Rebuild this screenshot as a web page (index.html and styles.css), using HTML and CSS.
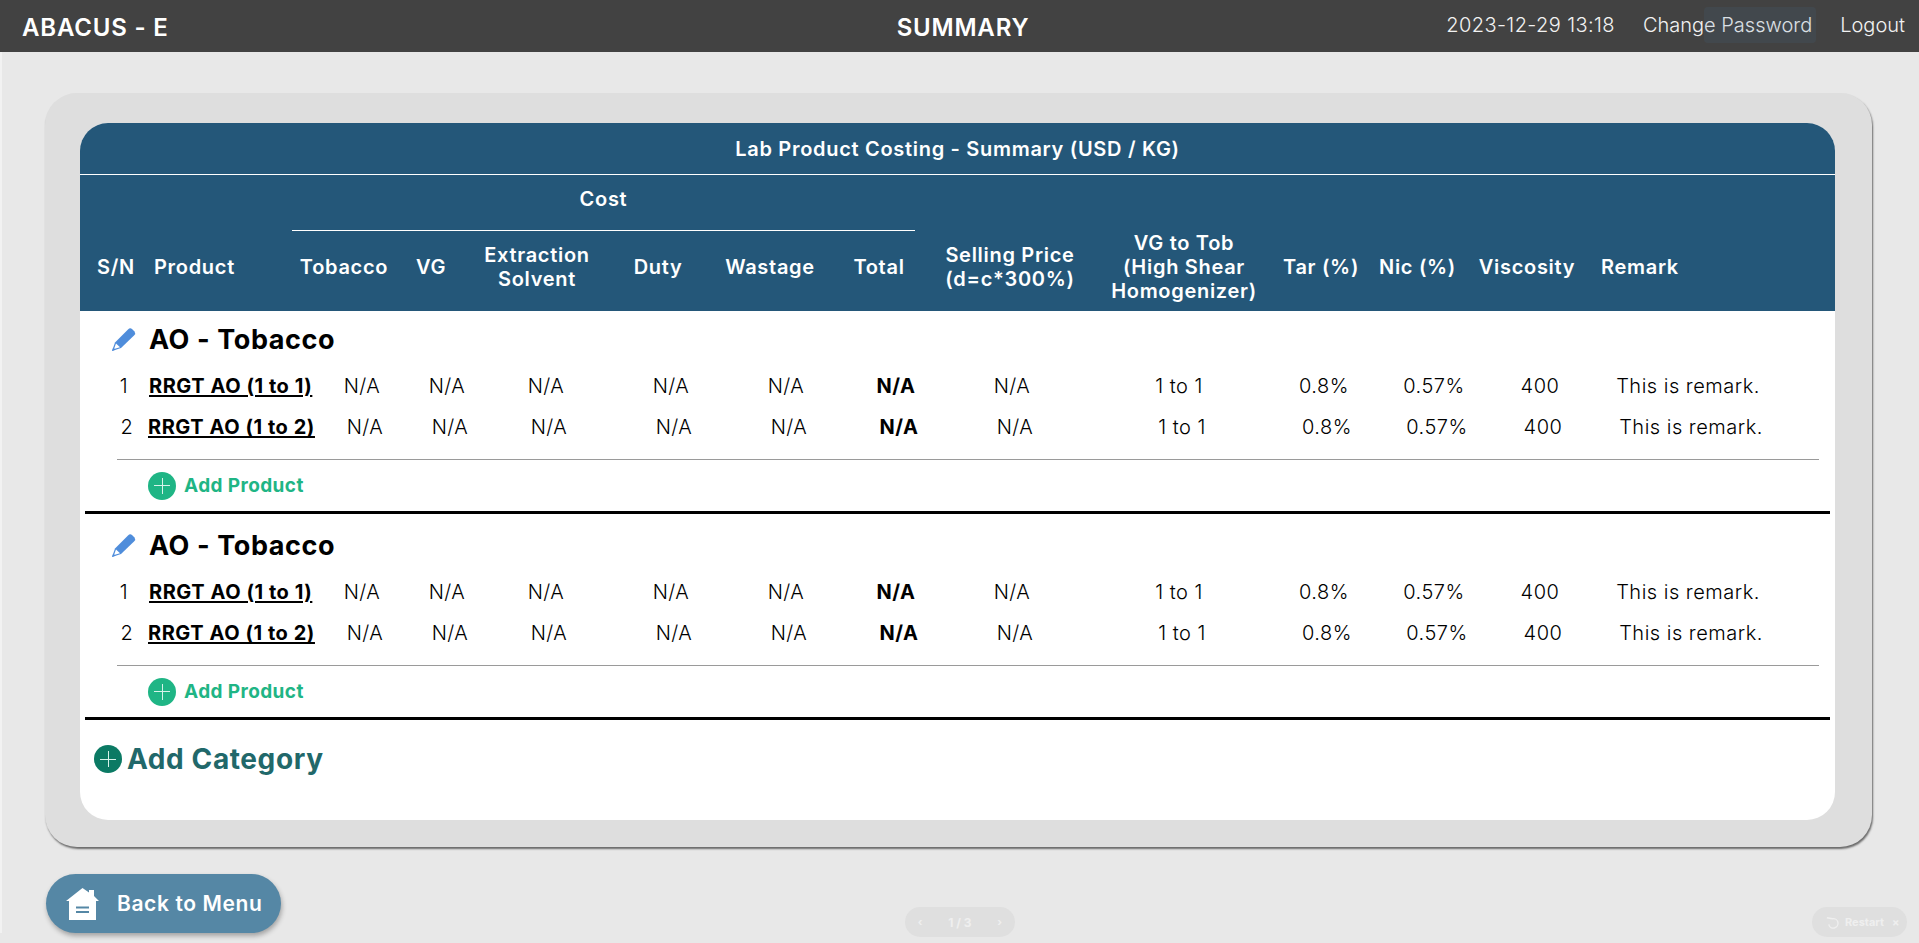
FILE: index.html
```html
<!DOCTYPE html>
<html lang="en">
<head>
    <meta charset="UTF-8">
    <meta name="viewport" content="width=device-width, initial-scale=1.0">
    <title>Summary</title>
    <link rel="stylesheet" href="styles.css">
</head>
<body>
    <header class="topbar">
        <div class="brand">ABACUS - E</div>
        <div class="page-title">SUMMARY</div>
        <nav class="top-links">
            <span class="clock">2023-12-29 13:18</span>
            <a class="change-pw">Change Password</a>
            <a class="logout">Logout</a>
        </nav>
    </header>

    <main class="page">
        <section class="card">
            <div class="panel">
                <table class="head-table">
                    <colgroup>
                        <col class="c-sn"><col class="c-product"><col class="c-tobacco"><col class="c-vg"><col class="c-solvent"><col class="c-duty"><col class="c-wastage"><col class="c-total"><col class="c-selling"><col class="c-vgtob"><col class="c-tar"><col class="c-nic"><col class="c-visc"><col class="c-remark">
                    </colgroup>
                    <thead>
                        <tr class="title-row">
                            <th colspan="14">Lab Product Costing - Summary (USD / KG)</th>
                        </tr>
                        <tr class="cost-row">
                            <th rowspan="2">S/N</th>
                            <th rowspan="2" class="left">Product</th>
                            <th colspan="6" class="cost">Cost</th>
                            <th rowspan="2">Selling Price<br>(d=c*300%)</th>
                            <th rowspan="2">VG to Tob<br>(High Shear<br>Homogenizer)</th>
                            <th rowspan="2">Tar (%)</th>
                            <th rowspan="2">Nic (%)</th>
                            <th rowspan="2">Viscosity</th>
                            <th rowspan="2" class="left flush">Remark</th>
                        </tr>
                        <tr class="label-row">
                            <th>Tobacco</th>
                            <th>VG</th>
                            <th>Extraction<br>Solvent</th>
                            <th>Duty</th>
                            <th>Wastage</th>
                            <th class="total-head">Total</th>
                        </tr>
                    </thead>
                </table>

                <div class="category">
                    <div class="cat-title">
                        <svg class="pencil" viewBox="0 0 24 24"><path d="M0 24 L3 15.5 L16 2.5 Q18 .5 20 2 L22.5 4.5 Q24 6.5 22 8.5 L9 21 Z" fill="#4f8ddb"/><path d="M2 22 L4 16.5 L8 20.2 Z" fill="#fff"/><path d="M0 24 L1.2 20.5 L3.5 22.8 Z" fill="#4f8ddb"/></svg>
                        <h2>AO - Tobacco</h2>
                    </div>
                    <div class="row">
                        <span>1</span><a class="name">RRGT AO (1 to 1)</a><span>N/A</span><span>N/A</span><span>N/A</span><span>N/A</span><span>N/A</span><b>N/A</b><span>N/A</span><span>1 to 1</span><span>0.8%</span><span>0.57%</span><span>400</span><span>This is remark.</span>
                    </div>
                    <div class="row row-shift">
                        <span>2</span><a class="name">RRGT AO (1 to 2)</a><span>N/A</span><span>N/A</span><span>N/A</span><span>N/A</span><span>N/A</span><b>N/A</b><span>N/A</span><span>1 to 1</span><span>0.8%</span><span>0.57%</span><span>400</span><span>This is remark.</span>
                    </div>
                    <div class="add-product"><i class="plus"></i>Add Product</div>
                </div>

                <div class="category">
                    <div class="cat-title">
                        <svg class="pencil" viewBox="0 0 24 24"><path d="M0 24 L3 15.5 L16 2.5 Q18 .5 20 2 L22.5 4.5 Q24 6.5 22 8.5 L9 21 Z" fill="#4f8ddb"/><path d="M2 22 L4 16.5 L8 20.2 Z" fill="#fff"/><path d="M0 24 L1.2 20.5 L3.5 22.8 Z" fill="#4f8ddb"/></svg>
                        <h2>AO - Tobacco</h2>
                    </div>
                    <div class="row">
                        <span>1</span><a class="name">RRGT AO (1 to 1)</a><span>N/A</span><span>N/A</span><span>N/A</span><span>N/A</span><span>N/A</span><b>N/A</b><span>N/A</span><span>1 to 1</span><span>0.8%</span><span>0.57%</span><span>400</span><span>This is remark.</span>
                    </div>
                    <div class="row row-shift">
                        <span>2</span><a class="name">RRGT AO (1 to 2)</a><span>N/A</span><span>N/A</span><span>N/A</span><span>N/A</span><span>N/A</span><b>N/A</b><span>N/A</span><span>1 to 1</span><span>0.8%</span><span>0.57%</span><span>400</span><span>This is remark.</span>
                    </div>
                    <div class="add-product"><i class="plus"></i>Add Product</div>
                </div>

                <div class="add-category"><i class="plus plus-dark"></i>Add Category</div>
            </div>
        </section>

        <a class="back-btn">
            <svg class="house" viewBox="0 0 33 32"><path d="M16.5 0 L23 4.5 V2 H28 V8 L33 13 H30 V32 H3 V13 H0 Z" fill="#fff"/><path d="M10 19.5 H23 M10 24 H23" stroke="#5587a5" stroke-width="1.8"/></svg>
            Back to Menu
        </a>
    </main>

    <!-- faded player controls sitting over the page -->
    <div class="pager"><span>&#8249;</span><span class="pager-num">1 / 3</span><span>&#8250;</span></div>
    <div class="restart">
        <svg class="restart-icon" viewBox="0 0 16 16"><path d="M2 3 L8 4 A5 5 0 1 1 4 10" fill="none" stroke="#efefef" stroke-width="1.5"/></svg>
        Restart <span class="restart-x">&times;</span>
    </div>
</body>
</html>
```

FILE: styles.css
```css
/* General */
html, body {
    margin: 0;
    height: 100%;
}

body {
    font-family: Inter, "Liberation Sans", sans-serif;
    background-color: #e8e8e8;
    color: #000;
    overflow: hidden;
}

/* Top bar */
.topbar {
    height: 52px;
    background-color: #424242;
    color: #fff;
    display: grid;
    grid-template-columns: 1fr auto 1fr;
    align-items: center;
    padding: 0 14px 0 22px;
    position: relative;
}

.brand {
    padding-top: 2px;
    font-size: 24px;
    font-weight: 600;
    letter-spacing: .8px;
}

.page-title {
    padding-top: 2px;
    font-size: 24px;
    font-weight: 600;
    letter-spacing: .8px;
    margin-right: 1px;
}

.top-links {
    justify-self: end;
    display: flex;
    gap: 28px;
    font-size: 20px;
    font-weight: 300;
    color: #f2f2f2;
    margin-top: -3px;
}

.clock {
    letter-spacing: .4px;
}

.change-pw {
    position: relative;
}

/* faint highlight left behind on the link */
.change-pw::after {
    content: "";
    position: absolute;
    left: 61px;
    right: -4px;
    top: -6px;
    bottom: -6px;
    border-radius: 4px;
    background-color: rgba(70, 110, 150, .14);
}

/* Main card */
.page {
    border-left: 2px solid #f2f2f2;
    padding: 41px 0 0 43px;
}

.card {
    width: 1827px;
    box-sizing: border-box;
    padding: 30px 37px 27px 35px;
    background-color: #dedede;
    border-radius: 32px;
    box-shadow: 1px 2px 2px #6a6a6a;
}

.panel {
    height: 697px;
    background-color: #fff;
    border-radius: 28px;
    overflow: hidden;
}

/* Header table */
.head-table {
    width: 1755px;
    table-layout: fixed;
    border-collapse: collapse;
    background-color: #245779;
    color: #fff;
}

.head-table th {
    font-size: 20px;
    letter-spacing: .7px;
    line-height: 24px;
    font-weight: 600;
    text-align: center;
    vertical-align: middle;
    white-space: nowrap;
    padding: 56px 0 8px;
}

.head-table .title-row th {
    height: 51px;
    padding: 0;
    border-bottom: 1px solid #fff;
}

.cost-row {
    height: 55px;
}

.head-table .cost {
    padding: 0 0 7px;
    border-bottom: 1px solid #fff;
}

.label-row {
    height: 80px;
}

.head-table .label-row th {
    padding: 0 0 8px;
}

.head-table .left {
    text-align: left;
    padding-left: 2px;
}

.head-table .flush {
    padding-left: 0;
}

.head-table .label-row .total-head {
    padding-left: 11px;
}

.c-sn { width: 72px; }
.c-product { width: 140px; }
.c-tobacco { width: 104px; }
.c-vg { width: 70px; }
.c-solvent { width: 142px; }
.c-duty { width: 100px; }
.c-wastage { width: 124px; }
.c-total { width: 83px; }
.c-selling { width: 190px; }
.c-vgtob { width: 158px; }
.c-tar { width: 116px; }
.c-nic { width: 74px; }
.c-visc { width: 148px; }
.c-remark { width: 234px; }

/* Category blocks */
.category {
    margin: 0 5px 3px;
    padding-top: 1px;
    border-bottom: 3px solid #000;
}

.cat-title {
    height: 52px;
    padding-top: 1px;
    display: flex;
    align-items: center;
    padding-left: 27px;
}

.pencil {
    width: 24px;
    height: 24px;
    margin-right: 13px;
}

.cat-title h2 {
    margin: 0;
    font-size: 27px;
    font-weight: 700;
    letter-spacing: .6px;
}

.row {
    display: grid;
    grid-template-columns: 40px 177px 82px 88px 110px 140px 90px 130px 102px 232px 58px 162px 50px 246px;
    height: 41.5px;
    align-items: center;
    justify-items: center;
    padding-left: 19px;
    font-size: 20px;
    letter-spacing: .5px;
    font-weight: 300;
}

.row b {
    font-weight: 700;
}

.row-shift {
    margin-left: 3px;
}

.name {
    justify-self: start;
    padding-left: 5px;
    font-weight: 700;
    letter-spacing: .55px;
    text-decoration: underline;
    text-decoration-thickness: 2px;
    text-underline-offset: 2px;
}

.row-shift .name {
    padding-left: 1px;
}

.add-product {
    height: 51px;
    margin: 11px 11px 0 32px;
    border-top: 1px solid #9a9a9a;
    display: flex;
    align-items: center;
    padding-left: 31px;
    font-size: 19px;
    letter-spacing: .4px;
    font-weight: 700;
    color: #1fb585;
}

/* Round plus icons */
.plus {
    flex: none;
    width: 28px;
    height: 28px;
    margin-right: 8px;
    border-radius: 50%;
    background-color: #1fb585;
    position: relative;
}

.plus::before, .plus::after {
    content: "";
    position: absolute;
    background-color: #d8f3ea;
}

.plus::before {
    left: 6px;
    right: 6px;
    top: 13.5px;
    height: 1px;
}

.plus::after {
    top: 6px;
    bottom: 6px;
    left: 13.5px;
    width: 1px;
}

.add-category {
    height: 72px;
    display: flex;
    align-items: center;
    padding-left: 14px;
    font-size: 28px;
    letter-spacing: .6px;
    font-weight: 700;
    color: #21686a;
}

.plus-dark {
    margin-right: 5px;
    background-color: #0b7a64;
}

/* Back button */
.back-btn {
    width: 235px;
    height: 59px;
    margin: 27px 0 0 1px;
    display: flex;
    align-items: center;
    border-radius: 30px;
    background-color: #5587a5;
    box-shadow: 1px 3px 5px rgba(0, 0, 0, .3);
    color: #fff;
    font-size: 21px;
    letter-spacing: .6px;
    font-weight: 600;
}

.house {
    width: 33px;
    height: 32px;
    margin: 0 18px 0 20px;
}

/* Player controls */
.pager, .restart {
    position: absolute;
    top: 907px;
    height: 30px;
    border-radius: 15px;
    background-color: #dfdfdf;
    color: #efefef;
    display: flex;
    align-items: center;
    font-weight: 700;
    font-size: 11px;
}

.pager {
    left: 905px;
    width: 110px;
    justify-content: space-around;
}

.pager-num {
    font-size: 12px;
}

.restart {
    left: 1812px;
    width: 95px;
    padding-left: 13px;
    box-sizing: border-box;
}

.restart-icon {
    width: 15px;
    height: 15px;
    margin-right: 5px;
}

.restart-x {
    margin-left: 8px;
}
```
